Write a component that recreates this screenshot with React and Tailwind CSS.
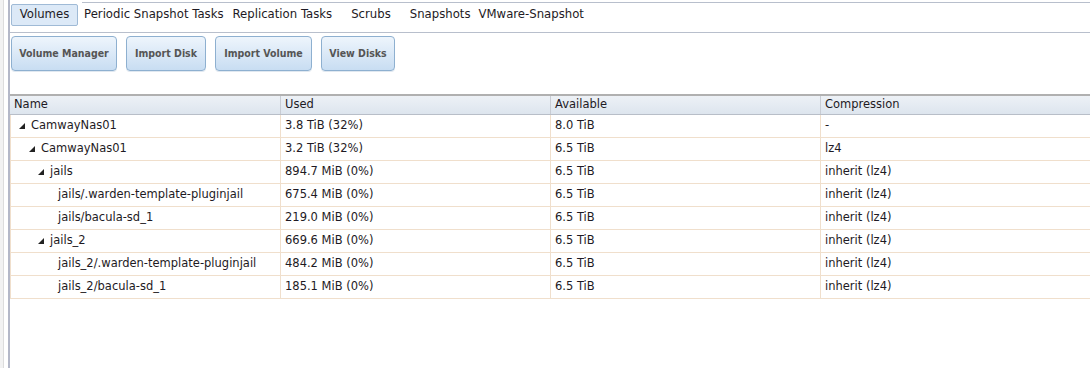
const tabs = [
  { label: "Periodic Snapshot Tasks", ml: "ml-[6px]" },
  { label: "Replication Tasks", ml: "ml-[9px]" },
  { label: "Scrubs", ml: "ml-[19px]" },
  { label: "Snapshots", ml: "ml-[19px]" },
  { label: "VMware-Snapshot", ml: "ml-[8px]" },
];

const buttons = [
  { label: "Volume Manager", w: "w-[106px]" },
  { label: "Import Disk", w: "w-[80px]" },
  { label: "Import Volume", w: "w-[97px]" },
  { label: "View Disks", w: "w-[74px]" },
];

const rows = [
  { name: "CamwayNas01", level: 0, open: true, used: "3.8 TiB (32%)", avail: "8.0 TiB", comp: "-" },
  { name: "CamwayNas01", level: 1, open: true, used: "3.2 TiB (32%)", avail: "6.5 TiB", comp: "lz4" },
  { name: "jails", level: 2, open: true, used: "894.7 MiB (0%)", avail: "6.5 TiB", comp: "inherit (lz4)" },
  { name: "jails/.warden-template-pluginjail", level: 3, used: "675.4 MiB (0%)", avail: "6.5 TiB", comp: "inherit (lz4)" },
  { name: "jails/bacula-sd_1", level: 3, used: "219.0 MiB (0%)", avail: "6.5 TiB", comp: "inherit (lz4)" },
  { name: "jails_2", level: 2, open: true, used: "669.6 MiB (0%)", avail: "6.5 TiB", comp: "inherit (lz4)" },
  { name: "jails_2/.warden-template-pluginjail", level: 3, used: "484.2 MiB (0%)", avail: "6.5 TiB", comp: "inherit (lz4)" },
  { name: "jails_2/bacula-sd_1", level: 3, used: "185.1 MiB (0%)", avail: "6.5 TiB", comp: "inherit (lz4)" },
];

const indents = ["pl-[8px]", "pl-[18px]", "pl-[27px]", "pl-[47px]"];

const Expander = () => (
  <svg width="6" height="6" viewBox="0 0 6 6" className="mr-[6px] shrink-0">
    <polygon points="6,0 6,6 0,6" fill="#222" />
  </svg>
);

export default function App() {
  return (
    <div className="w-[1090px] h-[368px] bg-white flex overflow-hidden text-[#1e1a24] font-['DejaVu_Sans',sans-serif] text-[11.5px]">
      {/* left frame edges */}
      <div className="w-[8px] shrink-0 border-l-[3px] border-l-[#f2f2f2] flex">
        <div className="w-px bg-[#dcdcdc]" />
      </div>
      <div className="w-[2px] shrink-0 bg-[#b4b8c8]" />

      <div className="flex-1 flex flex-col">
        {/* tabs */}
        <div className="h-[33px] flex items-end border-b border-[#b8bfcc] relative">
          <div className="absolute left-[72px] right-0 top-[2px] h-px bg-[#b8bfcc]" />
          <div className="flex items-center h-[30px] pb-[4px] text-[11.7px]">
            <div className="ml-[1px] w-[67px] h-[22px] flex items-center justify-center bg-[#dce9f7] border border-[#9fbad6] rounded-[2px]">
              Volumes
            </div>
            {tabs.map((t) => (
              <div key={t.label} className={t.ml}>
                {t.label}
              </div>
            ))}
          </div>
        </div>

        {/* action buttons */}
        <div className="flex gap-[9px] pl-[1px] pt-[3px] h-[61px]">
          {buttons.map((b) => (
            <div
              key={b.label}
              className={`${b.w} h-[35px] flex items-center justify-center whitespace-nowrap rounded-[4px] border border-[#8eb0d0] bg-gradient-to-b from-[#eef5fc] to-[#c8ddf2] font-bold text-[#555] text-[10.5px] font-['DejaVu_Sans_Condensed','DejaVu_Sans',sans-serif] shadow-[0_1px_0_#e0e8f0]`}
            >
              {b.label}
            </div>
          ))}
        </div>

        {/* table */}
        <div className="border-t-2 border-[#b0b0b0]">
          <div className="grid grid-cols-[270px_270px_270px_1fr] h-[19px] bg-gradient-to-b from-[#edf1f6] to-[#dde5ee] border-b border-[#b8bec8]">
            {["Name", "Used", "Available", "Compression"].map((h, i) => (
              <div key={h} className={`flex items-center pl-[4px] ${i > 0 ? "border-l border-[#c8ccd4]" : ""}`}>
                {h}
              </div>
            ))}
          </div>
          {rows.map((r, idx) => (
            <div key={idx} className="grid grid-cols-[270px_270px_270px_1fr] h-[23px] border-b border-[#f0dfcc]">
              <div className={`flex items-center border-l border-[#f0dfcc] ${indents[r.level]}`}>
                {r.open && <Expander />}
                {r.name}
              </div>
              <div className="flex items-center pl-[4px] border-l border-[#f0dfcc]">{r.used}</div>
              <div className="flex items-center pl-[4px] border-l border-[#f0dfcc]">{r.avail}</div>
              <div className="flex items-center pl-[4px] border-l border-[#f0dfcc]">{r.comp}</div>
            </div>
          ))}
        </div>
      </div>
    </div>
  );
}
